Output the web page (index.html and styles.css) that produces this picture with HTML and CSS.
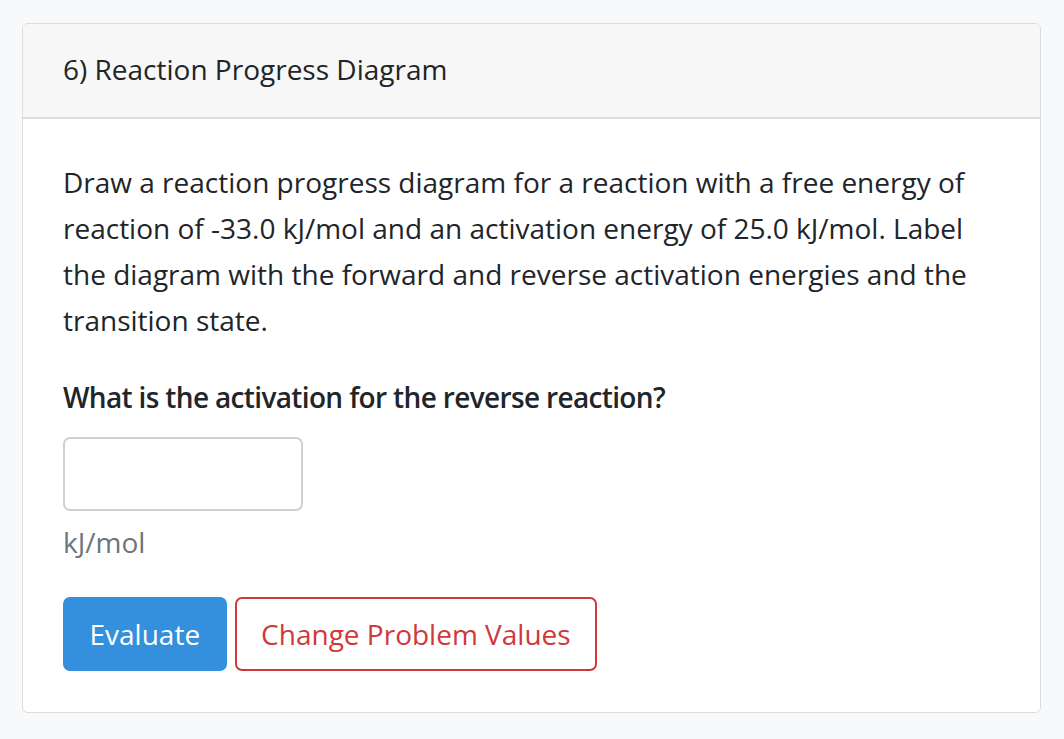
FILE: index.html
```html
<!DOCTYPE html>
<html>
<head>
<meta charset="utf-8">
<link rel="stylesheet" href="styles.css">
</head>
<body>
<div class="page">
  <div class="card">
    <div class="card-header">6) Reaction Progress Diagram</div>
    <div class="card-body">
      <p class="prompt">Draw a reaction progress diagram for a reaction with a free energy of reaction of -33.0 kJ/mol and an activation energy of 25.0 kJ/mol. Label the diagram with the forward and reverse activation energies and the transition state.</p>
      <p class="question">What is the activation for the reverse reaction?</p>
      <input class="answer" type="text">
      <div class="unit">kJ/mol</div>
      <div class="actions">
        <button class="btn btn-primary">Evaluate</button>
        <button class="btn btn-outline-danger">Change Problem Values</button>
      </div>
    </div>
  </div>
</div>
</body>
</html>
```
FILE: styles.css
```css
html, body {
  margin: 0;
  padding: 0;
  background: #f8f9fa;
}
body {
  font-family: "Open Sans", "Lato", sans-serif;
  color: #212529;
  font-size: 28px;
}
.page {
  padding: 23px 23px 0 22px;
}
.card {
  background: #fff;
  border: 1px solid #dcdcdc;
  border-radius: 6px;
  overflow: hidden;
}
.card-header {
  box-sizing: border-box;
  background: #f7f7f7;
  border-bottom: 2px solid #dcdcdc;
  padding: 0 40px 4px 40px;
  height: 95px;
  display: flex;
  align-items: center;
  line-height: 46px;
}
.card-body {
  padding: 40px 40px 41px 40px;
}
.prompt {
  margin: 0 0 31px 0;
  line-height: 46px;
}
.question {
  margin: 0 0 17px 0;
  font-weight: 600;
  letter-spacing: -0.65px;
  line-height: 46px;
}
.answer {
  display: block;
  box-sizing: border-box;
  width: 240px;
  height: 74px;
  border: 2px solid #cfd0d2;
  border-radius: 7px;
  margin: 0;
  font: inherit;
}
.unit {
  color: #6c757d;
  line-height: 46px;
  margin-top: 8px;
}
.actions {
  display: flex;
  gap: 8px;
  margin-top: 32px;
}
.btn {
  font: inherit;
  height: 74px;
  padding: 0 24.5px;
  border-radius: 7px;
  cursor: pointer;
}
.btn-primary {
  background: #3490dc;
  border: 2px solid #3490dc;
  color: #fff;
}
.btn-outline-danger {
  background: #fff;
  border: 2px solid #d0383a;
  color: #d0383a;
}
```
